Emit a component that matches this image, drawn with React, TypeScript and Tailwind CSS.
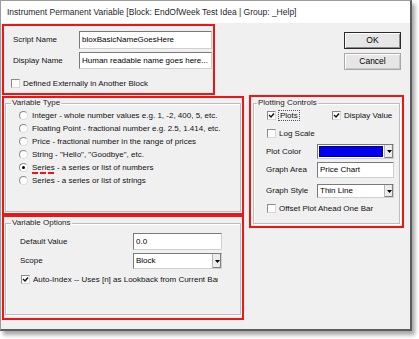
const font = { fontFamily: "'Liberation Sans', Arial, sans-serif" }

function Check({ checked = false }: { checked?: boolean }) {
  return (
    <span className="relative inline-block w-[9px] h-[9px] shrink-0 bg-white border border-[#8a8a8a] border-r-[#d8d8d8] border-b-[#d8d8d8]">
      {checked && (
        <svg viewBox="0 0 7 7" className="absolute left-0 top-0 w-[7px] h-[7px]">
          <path d="M1 3 L3 5 L6 1.5" stroke="#111" strokeWidth="1.4" fill="none" />
        </svg>
      )}
    </span>
  )
}

function Radio({ checked = false }: { checked?: boolean }) {
  return (
    <span className="relative inline-flex items-center justify-center w-[9px] h-[9px] shrink-0 rounded-full bg-white border border-[#8a8a8a] border-r-[#dcdcdc] border-b-[#dcdcdc]">
      {checked && <span className="w-[3px] h-[3px] rounded-full bg-black" />}
    </span>
  )
}

function Arrow() {
  return (
    <span className="flex items-center justify-center w-[9px] h-full bg-[#ececec] border-l border-[#b5b5b5] shadow-[inset_-1px_-1px_0_#808080]">
      <svg viewBox="0 0 5 3" className="w-[5px] h-[3px]">
        <path d="M0 0 H5 L2.5 3 Z" fill="#000" />
      </svg>
    </span>
  )
}

function Field({ text, w, h }: { text: string; w: string; h: string }) {
  return (
    <div className={`${w} ${h} flex items-center bg-white border border-[#7a7a7a] border-r-[#cfcfcf] border-b-[#cfcfcf] pl-[2px] text-black whitespace-nowrap overflow-hidden`}>
      {text}
    </div>
  )
}

function Select({ text, w, h }: { text: string; w: string; h: string }) {
  return (
    <div className={`${w} ${h} flex items-stretch bg-white border border-[#7a7a7a] border-r-[#cfcfcf] border-b-[#cfcfcf] text-black`}>
      <span className="flex-1 flex items-center pl-[2px] whitespace-nowrap">{text}</span>
      <Arrow />
    </div>
  )
}

const legend = 'ml-[5px] px-[1px] leading-[10px] text-[#222]'
const frame = 'border border-[#bdbdbd] shadow-[inset_1px_1px_0_#ffffff,1px_1px_0_#ffffff]'

export default function App() {
  const types = [
    'Integer - whole number values e.g. 1, -2, 400, 5, etc.',
    'Floating Point - fractional number e.g. 2.5, 1.414, etc.',
    'Price - fractional number in the range of prices',
    'String - "Hello", "Goodbye", etc.',
    'SERIES_NUM',
    'Series - a series or list of strings',
  ]

  return (
    <div className="w-[419px] h-[339px] bg-white overflow-hidden text-[8px] text-[#111]" style={font}>
      <div className="w-[412px] h-[331px] bg-[#f0f0f0] border-l border-t border-[#9c9c9c] border-r-2 border-b-2 border-r-[#5c5c5c] border-b-[#5c5c5c] shadow-[3px_4px_4px_rgba(0,0,0,0.35)] flex flex-col">
        <div className="h-[22px] shrink-0 bg-white flex items-center pl-[6px] text-[8.5px] text-[#1e1e2a]">
          Instrument Permanent Variable [Block: EndOfWeek Test Idea | Group: _Help]
        </div>

        <div className="flex">
          {/* left column */}
          <div className="w-[243px] pl-[1px] flex flex-col">
            <div className="mt-[1px] w-[213px] h-[71px] border-2 border-[#f01414] flex flex-col">
              <div className="mt-[5px] pl-[9px] flex items-center">
                <span className="w-[66px]">Script Name</span>
                <Field text="bloxBasicNameGoesHere" w="w-[133px]" h="h-[18px]" />
              </div>
              <div className="mt-[3px] pl-[9px] flex items-center">
                <span className="w-[66px]">Display Name</span>
                <Field text="Human readable name goes here..." w="w-[133px]" h="h-[17px]" />
              </div>
              <div className="mt-[9px] h-[11px] pl-[7px] flex items-center gap-[3px]">
                <Check />
                <span>Defined Externally in Another Block</span>
              </div>
            </div>

            <div className="mt-[1px] w-[242px] h-[119px] border-2 border-[#f01414]">
              <fieldset className={`ml-[1px] w-[236px] h-[114px] ${frame}`}>
                <legend className={legend}>Variable Type</legend>
                <div className="mt-[1px] pl-[13px] flex flex-col">
                  {types.map((t) => (
                    <div key={t} className="h-[13px] flex items-center gap-[4px]">
                      <Radio checked={t === 'SERIES_NUM'} />
                      {t === 'SERIES_NUM' ? (
                        <span>
                          <span className="underline decoration-dashed decoration-[#f01414] decoration-[2px] underline-offset-[3px]">Series</span>
                          {' - a series or list of numbers'}
                        </span>
                      ) : (
                        <span>{t}</span>
                      )}
                    </div>
                  ))}
                </div>
              </fieldset>
            </div>

            <div className="w-[242px] h-[105px] border-2 border-[#f01414]">
              <fieldset className={`mt-[1px] ml-[1px] w-[236px] h-[97px] ${frame}`}>
                <legend className={legend}>Variable Options</legend>
                <div className="mt-[5px] pl-[14px] flex items-center">
                  <span className="w-[113px]">Default Value</span>
                  <Field text="0.0" w="w-[89px]" h="h-[17px]" />
                </div>
                <div className="mt-[3px] pl-[14px] flex items-center">
                  <span className="w-[113px]">Scope</span>
                  <Select text="Block" w="w-[89px]" h="h-[16px]" />
                </div>
                <div className="mt-[5px] h-[11px] pl-[15px] flex items-center gap-[3px]">
                  <Check checked />
                  <span className="w-[185px] overflow-hidden whitespace-nowrap">
                    Auto-Index -- Uses [n] as Lookback from Current Bar
                  </span>
                </div>
              </fieldset>
            </div>
          </div>

          {/* right column */}
          <div className="ml-[5px] flex flex-col">
            <button className="mt-[9px] ml-[95px] w-[57px] h-[17px] bg-[#e6e6e6] border border-[#2a2a2a] shadow-[inset_1px_1px_0_#ffffff,inset_-1px_-1px_0_#8a8a8a] text-[8.5px] text-black">
              OK
            </button>
            <button className="mt-[4px] ml-[95px] w-[57px] h-[17px] bg-[#e6e6e6] border border-[#a8a8a8] shadow-[inset_1px_1px_0_#ffffff,inset_-1px_-1px_0_#c8c8c8] text-[8.5px] text-black">
              Cancel
            </button>

            <div className="mt-[25px] w-[155px] h-[133px] border-2 border-[#f01414]">
              <fieldset className={`mt-[1px] ml-[2px] w-[147px] h-[126px] ${frame}`}>
                <legend className="ml-[3px] px-[1px] leading-[10px] text-[#222]">Plotting Controls</legend>
                <div className="mt-[2px] h-[11px] pl-[13px] flex items-center">
                  <div className="w-[65px] flex items-center gap-[2px]">
                    <Check checked />
                    <span className="border border-dotted border-[#555] px-[1px] leading-[9px]">Plots</span>
                  </div>
                  <div className="flex items-center gap-[3px]">
                    <Check checked />
                    <span>Display Value</span>
                  </div>
                </div>
                <div className="mt-[7px] h-[11px] pl-[13px] flex items-center gap-[3px]">
                  <Check />
                  <span>Log Scale</span>
                </div>
                <div className="mt-[5px] pl-[12px] flex items-center">
                  <span className="w-[51px]">Plot Color</span>
                  <div className="w-[77px] h-[15px] flex items-stretch bg-white border border-[#7a7a7a] border-r-[#cfcfcf] border-b-[#cfcfcf]">
                    <span className="flex-1 m-[1px] bg-[#0000f0] border border-[#000080]" />
                    <Arrow />
                  </div>
                </div>
                <div className="mt-[3px] pl-[12px] flex items-center">
                  <span className="w-[51px]">Graph Area</span>
                  <Field text="Price Chart" w="w-[77px]" h="h-[16px]" />
                </div>
                <div className="mt-[6px] pl-[12px] flex items-center">
                  <span className="w-[51px]">Graph Style</span>
                  <Select text="Thin Line" w="w-[77px]" h="h-[14px]" />
                </div>
                <div className="mt-[5px] h-[11px] pl-[13px] flex items-center gap-[3px]">
                  <Check />
                  <span>Offset Plot Ahead One Bar</span>
                </div>
              </fieldset>
            </div>
          </div>
        </div>
      </div>
    </div>
  )
}
